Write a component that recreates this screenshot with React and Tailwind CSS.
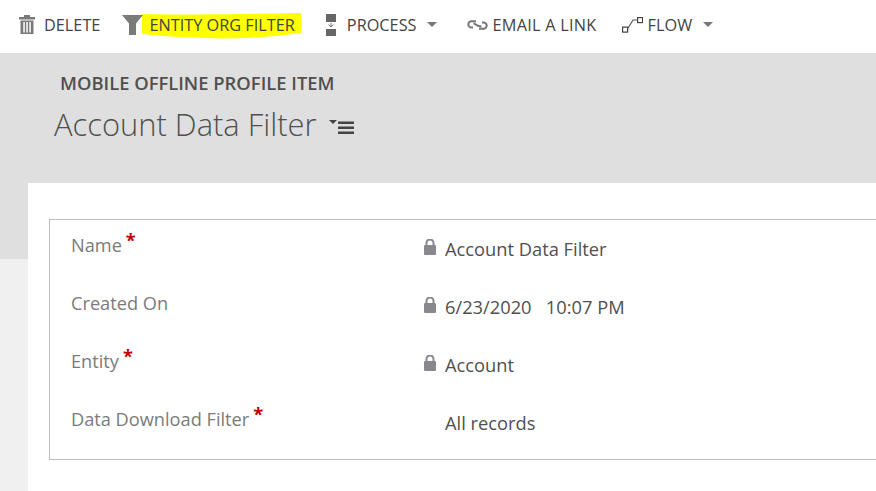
const font = { fontFamily: '"Open Sans", "Noto Sans", sans-serif' };

function Trash() {
  return (
    <svg width="16" height="19" viewBox="0 0 16 19" className="shrink-0">
      <rect x="5" y="0" width="6" height="2" fill="#7a7a7a" />
      <rect x="0" y="2" width="16" height="2.500" fill="#7a7a7a" />
      <path d="M1.500 5.500h13V19h-13z" fill="#7a7a7a" />
      <rect x="4.300" y="7" width="1.500" height="10.500" fill="#fff" />
      <rect x="7.300" y="7" width="1.500" height="10.500" fill="#fff" />
      <rect x="10.300" y="7" width="1.500" height="10.500" fill="#fff" />
    </svg>
  );
}
function Funnel() {
  return (
    <svg width="21" height="20" viewBox="0 0 21 20" className="shrink-0 relative z-10">
      <path d="M0 0h21l-7 8.500V20H7V8.500z" fill="#7a7a7a" />
    </svg>
  );
}
function ProcessIcon() {
  return (
    <svg width="12" height="22" viewBox="0 0 12 22" className="shrink-0">
      <rect x="1" y="0" width="10" height="8" fill="#666" />
      <rect x="1" y="15" width="10" height="7" fill="#666" />
      <path d="M6 9v3.500M3.500 10.500l2.500 2.500 2.500-2.500" stroke="#777" strokeWidth="1" fill="none" />
    </svg>
  );
}
function LinkIcon() {
  return (
    <svg width="21" height="10" viewBox="0 0 21 10" className="shrink-0">
      <path d="M9 1.200H4.500a3.200 3.200 0 0 0 0 6.400H6M15 2.400h1.500a3.200 3.200 0 0 1 0 6.400H12M6.500 3.500c2 0 3 3 8 3" stroke="#777" strokeWidth="2" fill="none" />
    </svg>
  );
}
function FlowIcon() {
  return (
    <svg width="21" height="16" viewBox="0 0 21 16" className="shrink-0">
      <rect x="0.600" y="10.100" width="5" height="5" fill="none" stroke="#444" strokeWidth="1.200" />
      <rect x="15.600" y="0.600" width="5" height="5" fill="none" stroke="#444" strokeWidth="1.200" />
      <path d="M5.500 12 11 3h4.500" fill="none" stroke="#555" strokeWidth="1.100" />
    </svg>
  );
}
function Caret() {
  return (
    <svg width="10" height="5" viewBox="0 0 10 5" className="shrink-0 mt-[-1px]">
      <path d="M0 0h10L5 5z" fill="#777" />
    </svg>
  );
}
function Lock() {
  return (
    <svg width="12" height="16" viewBox="0 0 12 16" className="shrink-0">
      <path d="M2.500 7V4a3.500 3.500 0 0 1 7 0V7" fill="none" stroke="#88888d" strokeWidth="2" />
      <rect x="0" y="6" width="12" height="10" rx="1" fill="#88888d" />
    </svg>
  );
}

function Row({ label, required, locked, value }) {
  return (
    <div className="flex items-start h-[58px]">
      <div className="w-[374px] flex shrink-0 pl-[21px] text-[18.200px] leading-[24px] text-[#7b7b7b]">
        <span>{label}</span>
        {required && <span className="ml-[4px] -mt-[5px] text-[#c00000] font-bold">*</span>}
      </div>
      <div className="w-[21px] shrink-0 pt-[6px]">{locked && <Lock />}</div>
      <div className="pt-[4px] text-[18.300px] leading-[24px] text-[#505050] whitespace-pre">{value}</div>
    </div>
  );
}

export default function App() {
  return (
    <div className="w-[876px] h-[491px] overflow-hidden bg-white flex flex-col" style={font}>
      <div className="h-[53px] shrink-0 flex items-center pl-[19px] pb-[4px] text-[#444] text-[16.300px] leading-[22px] whitespace-nowrap">
        <div className="flex items-center gap-[9px]">
          <Trash />
          <span>DELETE</span>
        </div>
        <div className="flex items-center gap-[6px] ml-[22px]">
          <Funnel />
          <span className="relative">
            <svg width="161" height="27" viewBox="0 0 161 27" className="absolute left-[-8px] top-[-1px]">
              <path d="M1 1 C40 2 100 1 160 0 C161 7 161 14 160 20 C110 27 60 27 1 21 Z" fill="#ffff00" />
            </svg>
            <span className="relative">ENTITY ORG FILTER</span>
          </span>
        </div>
        <div className="flex items-center gap-[10px] ml-[30px]">
          <ProcessIcon />
          <span>PROCESS</span>
          <Caret />
        </div>
        <div className="flex items-center gap-[5px] ml-[30px]">
          <LinkIcon />
          <span className="tracking-[0.250px]">EMAIL A LINK</span>
        </div>
        <div className="flex items-center gap-[5px] ml-[25px]">
          <FlowIcon />
          <span>FLOW</span>
          <span className="ml-[6px] flex"><Caret /></span>
        </div>
      </div>

      <div className="h-[130px] shrink-0 bg-[#dfdfdf] pl-[54px] pt-[18px]">
        <div className="pl-[6px] text-[18.400px] leading-[24px] font-semibold text-[#505050]">MOBILE OFFLINE PROFILE ITEM</div>
        <div className="flex items-center mt-[7px]">
          <span className="text-[30.900px] leading-[44px] font-light text-[#505050]">Account Data Filter</span>
          <svg width="25" height="14" viewBox="0 0 25 14" className="ml-[12px] mt-[5px]">
            <path d="M0 0h8L4 4z" fill="#444" />
            <rect x="9" y="1.500" width="16" height="2.500" fill="#444" />
            <rect x="9" y="6.500" width="16" height="2.500" fill="#444" />
            <rect x="9" y="11.500" width="16" height="2.500" fill="#444" />
          </svg>
        </div>
      </div>

      <div className="flex-1 flex min-h-0">
        <div className="w-[28px] shrink-0 flex flex-col bg-[#f0f0f0]">
          <div className="h-[76px] bg-[#dfdfdf]" />
        </div>
        <div className="flex-1 bg-white pl-[21px] pt-[36px]">
          <div className="h-[241px] w-[900px] border border-[#bdbdbd] pt-[13px]">
            <Row label="Name" required locked value="Account Data Filter" />
            <Row label="Created On" locked value="6/23/2020   10:07 PM" />
            <Row label="Entity" required locked value="Account" />
            <Row label="Data Download Filter" required value="All records" />
          </div>
        </div>
      </div>
    </div>
  );
}
